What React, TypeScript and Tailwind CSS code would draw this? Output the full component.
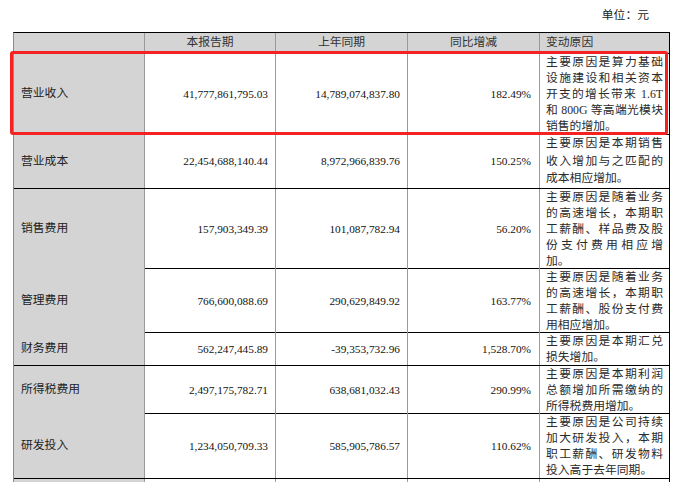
import React from "react";

type Row = {
  label: string;
  a: string;
  b: string;
  c: string;
  lines: string[];
  h: string;
  lh: string;
};

const rows: Row[] = [
  {
    label: "营业收入",
    a: "41,777,861,795.03",
    b: "14,789,074,837.80",
    c: "182.49%",
    lines: ["主要原因是算力基础", "设施建设和相关资本", "开支的增长带来 1.6T", "和 800G 等高端光模块", "销售的增加。"],
    h: "h-[81px]",
    lh: "leading-[16px]",
  },
  {
    label: "营业成本",
    a: "22,454,688,140.44",
    b: "8,972,966,839.76",
    c: "150.25%",
    lines: ["主要原因是本期销售", "收入增加与之匹配的", "成本相应增加。"],
    h: "h-[54px]",
    lh: "leading-[17.5px]",
  },
  {
    label: "销售费用",
    a: "157,903,349.39",
    b: "101,087,782.94",
    c: "56.20%",
    lines: ["主要原因是随着业务", "的高速增长，本期职", "工薪酬、样品费及股", "份支付费用相应增", "加。"],
    h: "h-[80px]",
    lh: "leading-[16px]",
  },
  {
    label: "管理费用",
    a: "766,600,088.69",
    b: "290,629,849.92",
    c: "163.77%",
    lines: ["主要原因是随着业务", "的高速增长，本期职", "工薪酬、股份支付费", "用相应增加。"],
    h: "h-[64px]",
    lh: "leading-[16px]",
  },
  {
    label: "财务费用",
    a: "562,247,445.89",
    b: "-39,353,732.96",
    c: "1,528.70%",
    lines: ["主要原因是本期汇兑", "损失增加。"],
    h: "h-[33px]",
    lh: "leading-[16px]",
  },
  {
    label: "所得税费用",
    a: "2,497,175,782.71",
    b: "638,681,032.43",
    c: "290.99%",
    lines: ["主要原因是本期利润", "总额增加所需缴纳的", "所得税费用增加。"],
    h: "h-[48px]",
    lh: "leading-[16px]",
  },
  {
    label: "研发投入",
    a: "1,234,050,709.33",
    b: "585,905,786.57",
    c: "110.62%",
    lines: ["主要原因是公司持续", "加大研发投入，本期", "职工薪酬、研发物料", "投入高于去年同期。"],
    h: "h-[65px]",
    lh: "leading-[16px]",
  },
];

const font = "font-['Liberation_Serif','Noto_Sans_CJK_SC',serif]";
const cjk = "font-['Liberation_Serif','Noto_Sans_CJK_SC',sans-serif] text-[11.8px]";
const num = "font-['Liberation_Serif',serif] text-[11.3px] text-[#111]";
const grid = "grid grid-cols-[131px_131px_132px_132px_130px] border-b border-black";
const cell = "border-r border-[#9a9a9a]";

export default function App() {
  return (
    <div className={`relative w-[680px] h-[482px] overflow-hidden bg-white ${font}`}>
      <div className="flex h-[32px] items-center justify-end pr-[31px]">
        <span className={`${cjk} text-[#222]`}>单位：元</span>
      </div>

      <div className="ml-[13px] w-[657px] border-t border-l border-t-black border-l-[#8c8c8c]">
        <div className={`${grid} h-[21px] bg-[#d4d4d4] text-[#333]`}>
          <div className={cell} />
          <div className={`${cell} flex items-center justify-center ${cjk}`}>本报告期</div>
          <div className={`${cell} flex items-center justify-center ${cjk}`}>上年同期</div>
          <div className={`${cell} flex items-center justify-center ${cjk}`}>同比增减</div>
          <div className={`border-r border-black flex items-center pl-[6px] ${cjk}`}>变动原因</div>
        </div>

        {rows.map((r) => (
          <div key={r.label} className={`${grid} ${r.h}`}>
            <div className={`${cell} flex items-center bg-[#d4d4d4] pl-[7px] ${cjk} text-[#222]`}>{r.label}</div>
            <div className={`${cell} flex items-center justify-end pr-[7px] ${num}`}>{r.a}</div>
            <div className={`${cell} flex items-center justify-end pr-[7px] ${num}`}>{r.b}</div>
            <div className={`${cell} flex items-center justify-end pr-[8px] ${num}`}>{r.c}</div>
            <div className={`border-r border-black flex flex-col justify-center px-[6px] ${cjk} text-[#2a2a2a]`}>
              {r.lines.map((l, i) => (
                <div
                  key={i}
                  className={`${r.lh} whitespace-nowrap ${i < r.lines.length - 1 ? "text-justify [text-align-last:justify]" : ""}`}
                >
                  {l}
                </div>
              ))}
            </div>
          </div>
        ))}

        <div className={`${grid} h-[64px]`}>
          <div className={`${cell} bg-[#d4d4d4]`} />
          <div className={cell} />
          <div className={cell} />
          <div className={cell} />
          <div className={`border-r border-black flex flex-col px-[6px] pt-[1px] ${cjk} text-[#2a2a2a]`}>
            <div className="leading-[16px] text-justify [text-align-last:justify] whitespace-nowrap">主要原因是本期经营</div>
            <div className="leading-[16px]">活动增加。</div>
          </div>
        </div>
      </div>

      <div className="absolute left-[10px] top-[51px] h-[84px] w-[658px] rounded-[3px] border-[3px] border-[#f52222]" />
    </div>
  );
}
